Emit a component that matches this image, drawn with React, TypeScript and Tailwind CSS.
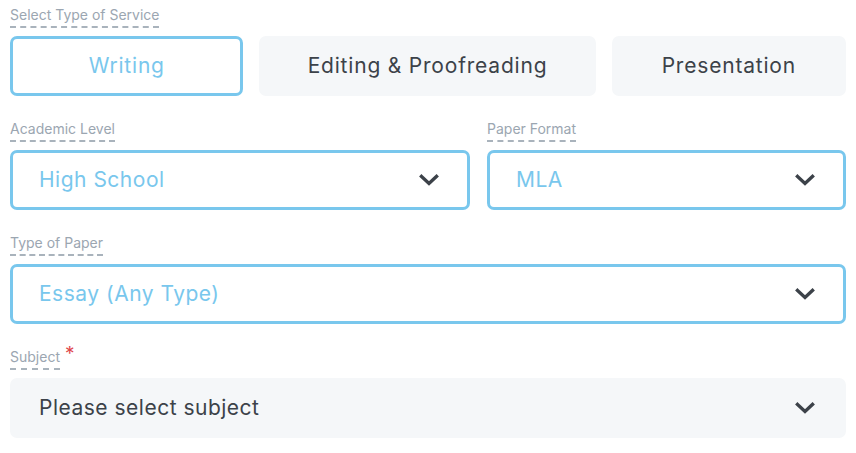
import { ReactNode } from 'react'

const font = { fontFamily: 'Inter, "Open Sans", sans-serif' }

// ラベル（点線の下線付き）
const Label = ({ children, required }: { children: ReactNode; required?: boolean }) => (
  <div className="flex items-start h-[24px] pt-[2px]">
    <span className="text-[14px] leading-[18px] pb-[2px] text-[#9ba6b1] border-b-2 border-dashed border-[#a9b3bc]">
      {children}
    </span>
    {required && <span className="text-[#e0474c] text-[19px] leading-[14px] ml-[5px] -mt-[1px]">*</span>}
  </div>
)

const Chevron = () => (
  <svg width="20" height="12" viewBox="0 0 20 12" fill="none">
    <path d="M2.5 2.5 L10 9.5 L17.5 2.5" stroke="#3c4249" strokeWidth="3.4" strokeLinecap="square" />
  </svg>
)

const Select = ({ value, active = true, className = '' }: { value: string; active?: boolean; className?: string }) => (
  <div
    className={`h-[60px] rounded-[7px] flex items-center justify-between ${
      active
        ? 'border-[3px] border-[#79c7ed] bg-white text-[#79c7ed] pl-[26px] pr-[28px]'
        : 'bg-[#f5f7f9] text-[#3c4249] pl-[29px] pr-[31px]'
    } ${className}`}
  >
    <span className="text-[21px] tracking-[0.5px]">{value}</span>
    <Chevron />
  </div>
)

const App = () => {
  return (
    <div className="w-[856px] h-[453px] bg-white px-[10px] pt-[4px]" style={font}>
      <Label>Select Type of Service</Label>
      <div className="flex gap-[16px] mt-[8px] text-[21px] tracking-[0.8px]">
        <button className="w-[234px] h-[60px] rounded-[7px] border-[3px] border-[#79c7ed] text-[#79c7ed]">
          Writing
        </button>
        <button className="w-[337px] h-[60px] rounded-[7px] bg-[#f5f7f9] text-[#3c4249]">
          Editing &amp; Proofreading
        </button>
        <button className="w-[235px] h-[60px] rounded-[7px] bg-[#f5f7f9] text-[#3c4249]">
          Presentation
        </button>
      </div>

      <div className="flex gap-[17px] mt-[22px]">
        <div className="w-[460px]">
          <Label>Academic Level</Label>
          <Select value="High School" className="mt-[8px]" />
        </div>
        <div className="flex-1">
          <Label>Paper Format</Label>
          <Select value="MLA" className="mt-[8px]" />
        </div>
      </div>

      <div className="mt-[22px]">
        <Label>Type of Paper</Label>
        <Select value="Essay (Any Type)" className="mt-[8px]" />
      </div>

      <div className="mt-[22px]">
        <Label required>Subject</Label>
        <Select value="Please select subject" active={false} className="mt-[8px]" />
      </div>
    </div>
  )
}

export default App
